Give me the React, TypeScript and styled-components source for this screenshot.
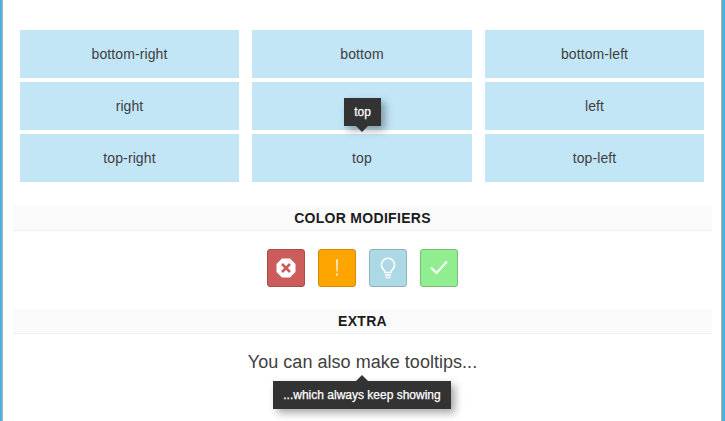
import React from "react";
import styled, { createGlobalStyle } from "styled-components";

const Global = createGlobalStyle`
  html, body { margin: 0; padding: 0; background: #fff; }
  body { font-family: "Liberation Sans", Arial, sans-serif; color: #3c3c3c; }
`;

const Frame = styled.div`
  box-sizing: border-box;
  width: 725px;
  height: 421px;
  overflow: hidden;
  background: #fff;
  border-left: 2px solid #4fb0da;
  border-right: 3px solid #4fb0da;
  box-shadow: inset 1px 0 0 #a9b4ba, inset -1px 0 0 #a9b4ba;
  padding: 30px 10px 0 11px;
`;

const PositionGrid = styled.div`
  display: grid;
  grid-template-columns: 219px 220px 219px;
  grid-auto-rows: 48px;
  column-gap: 13px;
  row-gap: 4px;
  padding: 0 7px;
`;

const Cell = styled.div`
  position: relative;
  display: flex;
  align-items: center;
  justify-content: center;
  background: #c3e6f7;
  font-size: 14px;
  letter-spacing: 0.1px;
  color: #404040;
`;

const Tip = styled.div`
  position: absolute;
  box-sizing: border-box;
  background: #333333;
  color: #fff;
  font-size: 12px;
  letter-spacing: 0;
  -webkit-text-stroke: 0.25px #fff;
  display: flex;
  align-items: center;
  justify-content: center;
  box-shadow: 4px 4px 8px rgba(0, 0, 0, 0.35);
  z-index: 2;
`;

const TopTip = styled(Tip)`
  left: 92px;
  top: 16px;
  width: 37px;
  height: 28px;
  &::after {
    content: "";
    position: absolute;
    left: 12px;
    bottom: -6px;
    border-left: 6px solid transparent;
    border-right: 6px solid transparent;
    border-top: 6px solid #333333;
  }
`;

const SectionTitle = styled.h2<{ $top: number }>`
  box-sizing: border-box;
  margin: ${(p) => p.$top}px 0 0;
  height: 25px;
  line-height: 24px;
  background: #fafafa;
  border-bottom: 1px solid #eeeeee;
  text-align: center;
  font-size: 14px;
  font-weight: 700;
  letter-spacing: 0.3px;
  color: #1c1c1c;
  text-transform: uppercase;
`;

const ButtonRow = styled.div`
  display: flex;
  justify-content: center;
  gap: 13px;
  margin-top: 18px;
`;

const IconButton = styled.div<{ $bg: string; $edge: string }>`
  box-sizing: border-box;
  width: 38px;
  height: 38px;
  border-radius: 3px;
  background: ${(p) => p.$bg};
  border: 1px solid ${(p) => p.$edge};
  display: flex;
  align-items: center;
  justify-content: center;
`;

const Extra = styled.div`
  position: relative;
  margin-top: 17px;
  text-align: center;
  font-size: 18px;
  line-height: 22px;
  letter-spacing: 0.03px;
  color: #404040;
`;

const ShowTip = styled(Tip)`
  left: 260px;
  top: 30px;
  width: 178px;
  height: 28px;
  &::after {
    content: "";
    position: absolute;
    left: 83px;
    top: -6px;
    border-left: 6px solid transparent;
    border-right: 6px solid transparent;
    border-bottom: 6px solid #333333;
  }
`;

const cells = ["bottom-right", "bottom", "bottom-left", "right", "", "left", "top-right", "top", "top-left"];

export default function App() {
  return (
    <Frame>
      <Global />
      <PositionGrid>
        {cells.map((c, i) => (
          <Cell key={i}>
            {c}
            {i === 4 && <TopTip>top</TopTip>}
          </Cell>
        ))}
      </PositionGrid>
      <SectionTitle $top={24}>Color modifiers</SectionTitle>
      <ButtonRow>
        <IconButton $bg="#cc5c5c" $edge="#a84c4c">
          <svg width="20" height="20" viewBox="0 0 20 20">
            <polygon points="6,0.5 14,0.5 19.5,6 19.5,14 14,19.5 6,19.5 0.5,14 0.5,6" fill="#fff" />
            <path d="M6 6l8 8M14 6l-8 8" stroke="#cc5c5c" strokeWidth="2.6" />
          </svg>
        </IconButton>
        <IconButton $bg="#ffa500" $edge="#d18a0a">
          <svg width="20" height="20" viewBox="0 0 20 20">
            <path d="M9.2 1.5h1.6l-.3 12h-1z" fill="#fff" />
            <rect x="9.2" y="15.5" width="1.6" height="2" fill="#fff" />
          </svg>
        </IconButton>
        <IconButton $bg="#add8e6" $edge="#8fb0bc">
          <svg width="20" height="24" viewBox="0 0 20 24" fill="none" stroke="#fff" strokeWidth="1.6">
            <path d="M7 16.5c0-2.5-3.6-3.7-3.6-7.6a6.6 6.6 0 0 1 13.2 0c0 3.9-3.6 5.1-3.6 7.6z" />
            <path d="M7 19h6M7.5 21.5h5" />
          </svg>
        </IconButton>
        <IconButton $bg="#90ee90" $edge="#76bf78">
          <svg width="20" height="20" viewBox="0 0 20 20" fill="none" stroke="#fff" strokeWidth="2">
            <path d="M2 9.5l5.5 5.5L18 3.5" />
          </svg>
        </IconButton>
      </ButtonRow>
      <SectionTitle $top={22}>Extra</SectionTitle>
      <Extra>
        You can also make tooltips...
        <ShowTip>...which always keep showing</ShowTip>
      </Extra>
    </Frame>
  );
}
